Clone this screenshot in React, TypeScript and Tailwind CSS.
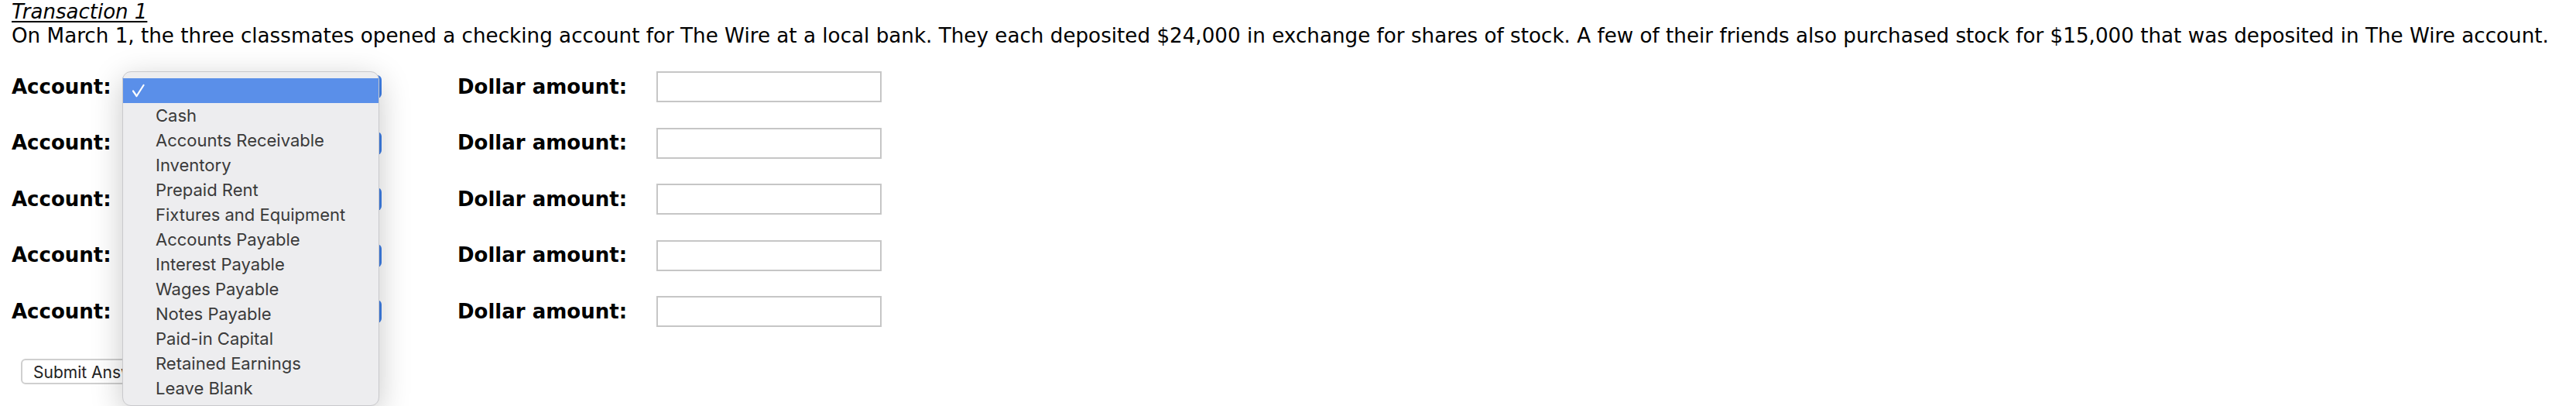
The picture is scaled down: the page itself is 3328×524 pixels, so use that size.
import React from "react"

const accounts = [
  "Cash",
  "Accounts Receivable",
  "Inventory",
  "Prepaid Rent",
  "Fixtures and Equipment",
  "Accounts Payable",
  "Interest Payable",
  "Wages Payable",
  "Notes Payable",
  "Paid-in Capital",
  "Retained Earnings",
  "Leave Blank",
]

const verdana = { fontFamily: '"DejaVu Sans", Verdana, sans-serif' }
const system = { fontFamily: 'Inter, "Liberation Sans", sans-serif' }

const Row: React.FC = () => (
  <div className="flex h-[72.5px] items-center">
    <label className="w-[143px] text-[26px] font-bold text-black">Account:</label>
    <div className="h-[30px] w-[335px] rounded-[6px] bg-[#3f7fe6]" />
    <label className="ml-[98px] w-[257px] text-[26px] font-bold text-black">Dollar amount:</label>
    <input
      className="h-[40px] w-[291px] border-2 border-[#c6c6c6] bg-white outline-none"
      type="text"
    />
  </div>
)

export default function App() {
  return (
    <div className="relative h-[524px] w-[3328px] overflow-hidden bg-white pl-[15px]" style={verdana}>
      <div className="text-[26px] leading-[30px] text-black italic underline underline-offset-[3px]">
        Transaction 1
      </div>
      <p className="whitespace-nowrap text-[26.2px] leading-[32px] text-black">
        On March 1, the three classmates opened a checking account for The Wire at a local bank. They
        each deposited $24,000 in exchange for shares of stock. A few of their friends also purchased
        stock for $15,000 that was deposited in The Wire account.
      </p>

      <div className="mt-[14px] flex flex-col">
        <Row />
        <Row />
        <Row />
        <Row />
        <Row />
      </div>

      <button
        className="mt-[24px] ml-[12px] h-[33px] rounded-[6px] border-2 border-[#cfcfcf] bg-white px-[14px] text-[21px] text-[#222]"
        style={system}
      >
        Submit Answer
      </button>

      {/* open select menu */}
      <div
        className="absolute top-[92px] left-[158px] w-[332px] rounded-[11px] border border-[#c9c9cc] bg-[#ededef] pt-[8px] pb-[6px] shadow-[0_10px_40px_rgba(0,0,0,0.22)]"
        style={system}
      >
        <div className="flex h-[32px] items-center bg-[#5a8fe9] pl-[12px]">
          <svg width="16" height="18" viewBox="0 0 16 18" fill="none">
            <path d="M1 9.5 L5.5 16 L14.5 2" stroke="white" strokeWidth="2.2" strokeLinecap="round" strokeLinejoin="round" />
          </svg>
        </div>
        {accounts.map((a) => (
          <div key={a} className="flex h-[32px] items-center pl-[42px] text-[22px] text-[#3a3a3a]">
            {a}
          </div>
        ))}
      </div>
    </div>
  )
}
